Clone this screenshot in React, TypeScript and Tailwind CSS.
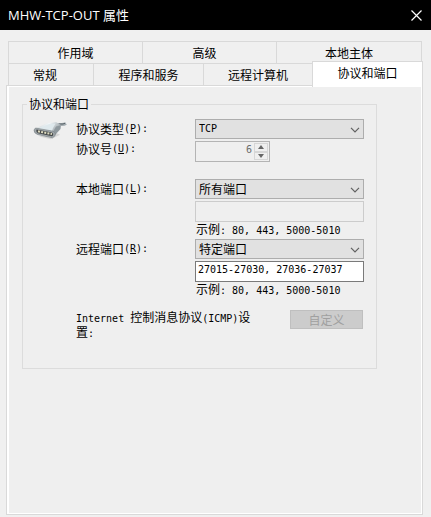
import React from "react";

const Latin = ({ children }: { children: React.ReactNode }) => (
  <span className="font-['DejaVu_Sans_Mono',monospace] text-[10px]">{children}</span>
);

const Tab = ({ label, className = "" }: { label: string; className?: string }) => (
  <button type="button" role="tab" className={`h-[22px] border-l border-t border-[#d9d9d9] leading-none ${className}`}>
    {label}
  </button>
);

const FieldLabel = ({ htmlFor, text, hotkey }: { htmlFor: string; text: string; hotkey: string }) => (
  <label htmlFor={htmlFor} className="flex h-5 items-center">
    {text}
    <Latin>
      (<u>{hotkey}</u>):
    </Latin>
  </label>
);

const Select = ({ id, value, className = "" }: { id: string; value: string; className?: string }) => (
  <div className="relative h-5">
    <select
      id={id}
      defaultValue={value}
      className={`block h-5 w-full appearance-none border border-[#adadad] bg-[#e1e1e1] pl-[3px] pr-5 leading-none ${className}`}
    >
      <option>{value}</option>
    </select>
    <svg className="pointer-events-none absolute right-1 top-2 h-[6px] w-[10px]" viewBox="0 0 10 6" fill="none" stroke="#606060" strokeWidth="1.2">
      <path d="M1 .8 5 4.800 9 .8" />
    </svg>
  </div>
);

const Hint = () => (
  <p className="mb-1 h-[13px] pl-px leading-[13px]">
    示例<Latin>: 80, 443, 5000-5010</Latin>
  </p>
);

const PlugIcon = () => (
  <svg className="h-5 w-[34px]" viewBox="0 0 34 20">
    <defs>
      <linearGradient id="shell" x1="0" y1="0" x2="1" y2="0.600">
        <stop offset="0" stopColor="#b9c1c5" />
        <stop offset="0.45" stopColor="#f2f6f8" />
        <stop offset="1" stopColor="#7f898f" />
      </linearGradient>
    </defs>
    <path d="M6 16.500 18 19.200l9-4.500-4-2z" fill="#d6d6d6" />
    <path d="M23 5.500C26 3 29 6 33 3.500" fill="none" stroke="#a2abb0" strokeWidth="3" />
    <path d="M24 5C27 3 29 5 32 3.300" fill="none" stroke="#5a6368" strokeWidth="1" />
    <path d="M1.500 9 14 3.200 23 2l5 3-.5 4-5.500 6-3 2.500z" fill="url(#shell)" />
    <path d="M5 8.300 15.500 4.200l7-.8L20 8l-1 3z" fill="#dfe9ed" />
    <path d="m20 12 3-5.500 4.500-1-.5 3-5 5.500z" fill="#8f999e" />
    <path d="M2.500 8 20 11.200q3.500 1.300 2 4.600l-2.500 2L4.500 14.500Q.800 13 1 10z" fill="#a0a7ab" stroke="#767d81" strokeWidth="0.600" />
    <path d="M3.500 9.600 19 12.400q2 .9 1 3l-1 .9L5 13.200q-2.200-.9-1.500-3.600z" fill="#45494a" />
    <path d="m5 11.300 14 2.800" stroke="#dedbc0" strokeWidth="2" strokeDasharray="2 1.200" />
  </svg>
);

const App = () => {
  return (
    <main className="flex min-h-screen flex-col bg-[#f0f0f0] pb-0.5 font-['Noto_Sans_CJK_SC',sans-serif] text-xs leading-3 text-black">
      {/* Title bar */}
      <header className="flex h-[30px] items-center justify-between bg-black pl-2 pr-[9px] text-white">
        <h1 className="font-['Open_Sans','Noto_Sans_CJK_SC',sans-serif] text-[13px]">MHW-TCP-OUT 属性</h1>
        <button type="button" aria-label="关闭">
          <svg className="h-[11px] w-[11px]" viewBox="0 0 11 11" stroke="#fff" strokeWidth="1.200">
            <path d="m.5.5 10 10m0-10-10 10" />
          </svg>
        </button>
      </header>

      {/* Tabs */}
      <div role="tablist" className="mt-[11px] pl-2 pr-[9px]">
        <div className="grid grid-cols-[134fr_134fr_145fr] border-r border-[#d9d9d9]">
          <Tab label="作用域" />
          <Tab label="高级" className="pr-2.5" />
          <Tab label="本地主体" />
        </div>
        <div className="grid grid-cols-[85fr_110fr_109fr_110fr]">
          <Tab label="常规" className="pr-3" />
          <Tab label="程序和服务" />
          <Tab label="远程计算机" />
          <button
            type="button"
            role="tab"
            aria-selected="true"
            className="relative z-10 -mb-0.5 -mr-px -mt-0.5 border-l border-r border-t border-[#d9d9d9] bg-white pb-1 leading-none"
          >
            协议和端口
          </button>
        </div>
      </div>

      {/* Page */}
      <section className="ml-1.5 mr-2 flex grow flex-col border border-[#d9d9d9]">
        <div className="grow border-y border-l-2 border-r border-white bg-[#efefef] pl-[13px] pr-[44px] pt-[11px]">
          <fieldset className="border border-[#dcdcdc] pb-7 pl-[10px] pr-3">
            <legend className="-ml-1.5 px-0.5">协议和端口</legend>
            <div className="mt-[9px] flex">
              <div className="w-[43px] shrink-0 pt-px">
                <PlugIcon />
              </div>
              <div className="grow">
                <div className="grid grid-cols-[119px_1fr]">
                  <FieldLabel htmlFor="type" text="协议类型" hotkey="P" />
                  <Select id="type" value="TCP" className="font-['DejaVu_Sans_Mono',monospace] text-[10px]" />
                </div>
                <div className="grid grid-cols-[119px_1fr]">
                  <FieldLabel htmlFor="number" text="协议号" hotkey="U" />
                  <div className="mt-0.5 flex h-[21px] w-[75px] border border-[#b4b4b4] p-px">
                    <input
                      id="number"
                      type="number"
                      disabled
                      defaultValue={6}
                      className="min-w-0 grow bg-transparent pb-1 pr-0.5 text-right font-['DejaVu_Sans_Mono',monospace] text-[10px] text-[#6d6d6d] [appearance:textfield] [&::-webkit-inner-spin-button]:appearance-none"
                    />
                    <div className="flex w-3.5 shrink-0 flex-col text-[#666]">
                      <button type="button" disabled aria-label="增加" className="flex grow items-center justify-center border border-[#d6d6d6]">
                        <svg className="h-[4px] w-[6px]" viewBox="0 0 6 4" fill="currentColor">
                          <path d="M3 0 6 4H0z" />
                        </svg>
                      </button>
                      <button type="button" disabled aria-label="减少" className="flex grow items-center justify-center border border-[#d6d6d6]">
                        <svg className="h-[4px] w-[6px]" viewBox="0 0 6 4" fill="currentColor">
                          <path d="M0 0h6L3 4z" />
                        </svg>
                      </button>
                    </div>
                  </div>
                </div>

                <div className="mt-[17px] grid grid-cols-[119px_1fr]">
                  <FieldLabel htmlFor="local" text="本地端口" hotkey="L" />
                  <div>
                    <Select id="local" value="所有端口" />
                    <input disabled aria-label="本地端口" className="mt-0.5 block h-[21px] w-full border border-[#cccccc] px-0.5" />
                    <Hint />
                  </div>
                </div>
                <div className="grid grid-cols-[119px_1fr]">
                  <FieldLabel htmlFor="remote" text="远程端口" hotkey="R" />
                  <div>
                    <Select id="remote" value="特定端口" />
                    <input
                      aria-label="远程端口"
                      defaultValue="27015-27030, 27036-27037"
                      className="mt-0.5 block h-[21px] w-full border border-[#7a7a7a] bg-white px-0.5 pb-1 font-['DejaVu_Sans_Mono',monospace] text-[10px]"
                    />
                    <Hint />
                  </div>
                </div>

                <div className="mt-[11px] flex justify-between">
                  <p className="w-[180px] leading-[13px]">
                    <Latin>Internet </Latin>控制消息协议<Latin>(ICMP)</Latin>设置<Latin>:</Latin>
                  </p>
                  <button type="button" disabled className="mr-px h-[19px] w-[73px] border border-[#bfbfbf] bg-[#cccccc] leading-none text-[#a0a0a0]">
                    自定义
                  </button>
                </div>
              </div>
            </div>
          </fieldset>
        </div>
      </section>
    </main>
  );
};

export default App;
